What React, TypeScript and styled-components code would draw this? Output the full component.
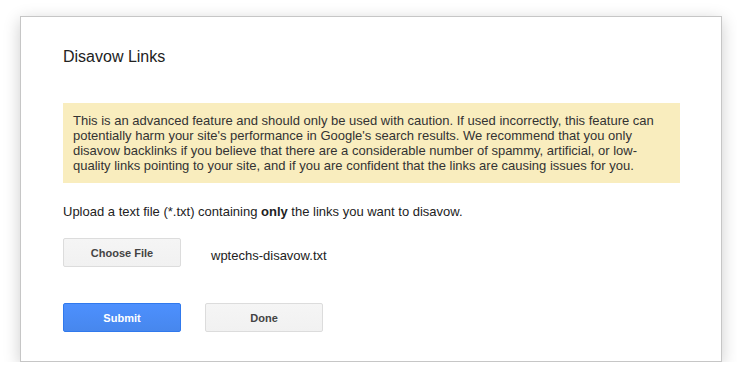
import styled, { createGlobalStyle } from 'styled-components';

const GlobalStyle = createGlobalStyle`
  html, body {
    margin: 0;
    padding: 0;
    background: #ffffff;
  }
  body {
    font-family: Arial, "Liberation Sans", sans-serif;
  }
`;

const Page = styled.div`
  padding: 16px 0 0 20px;
`;

const Dialog = styled.div`
  box-sizing: border-box;
  width: 702px;
  padding: 31px 41px 29px 42px;
  background: #ffffff;
  border: 1px solid #c6c6c6;
  box-shadow: 0 4px 16px rgba(0, 0, 0, 0.2);
`;

const Title = styled.h2`
  margin: 0;
  font-size: 16px;
  line-height: 18px;
  font-weight: normal;
  color: #222222;
`;

const Notice = styled.div`
  margin-top: 37px;
  padding: 10px;
  background: #f9edbe;
  font-size: 13px;
  line-height: 15px;
  color: #333333;
`;

const Instructions = styled.p`
  margin: 21px 0 0;
  font-size: 13px;
  line-height: 15px;
  color: #222222;
`;

const FileRow = styled.div`
  display: flex;
  align-items: flex-start;
  gap: 30px;
  margin-top: 19px;
`;

const FileName = styled.span`
  padding-top: 10px;
  font-size: 13px;
  line-height: 15px;
  color: #222222;
`;

const Actions = styled.div`
  display: flex;
  gap: 24px;
  margin-top: 36px;
`;

const Button = styled.button<{ $primary?: boolean }>`
  box-sizing: border-box;
  width: 118px;
  height: 29px;
  padding: 0 8px;
  border-radius: 2px;
  font-family: Arial, "Liberation Sans", sans-serif;
  font-size: 11px;
  font-weight: bold;
  cursor: pointer;
  border: 1px solid ${({ $primary }) => ($primary ? '#3079ed' : '#dcdcdc')};
  color: ${({ $primary }) => ($primary ? '#ffffff' : '#444444')};
  background: ${({ $primary }) =>
    $primary
      ? 'linear-gradient(#4d90fe, #4787ed)'
      : 'linear-gradient(#f5f5f5, #f1f1f1)'};
`;

export default function App() {
  return (
    <Page>
      <GlobalStyle />
      <Dialog>
        <Title>Disavow Links</Title>
        <Notice>
          This is an advanced feature and should only be used with caution. If used
          incorrectly, this feature can potentially harm your site's performance in
          Google's search results. We recommend that you only disavow backlinks if you
          believe that there are a considerable number of spammy, artificial, or
          low-quality links pointing to your site, and if you are confident that the
          links are causing issues for you.
        </Notice>
        <Instructions>
          Upload a text file (*.txt) containing <b>only</b> the links you want to disavow.
        </Instructions>
        <FileRow>
          <Button>Choose File</Button>
          <FileName>wptechs-disavow.txt</FileName>
        </FileRow>
        <Actions>
          <Button $primary>Submit</Button>
          <Button>Done</Button>
        </Actions>
      </Dialog>
    </Page>
  );
}
